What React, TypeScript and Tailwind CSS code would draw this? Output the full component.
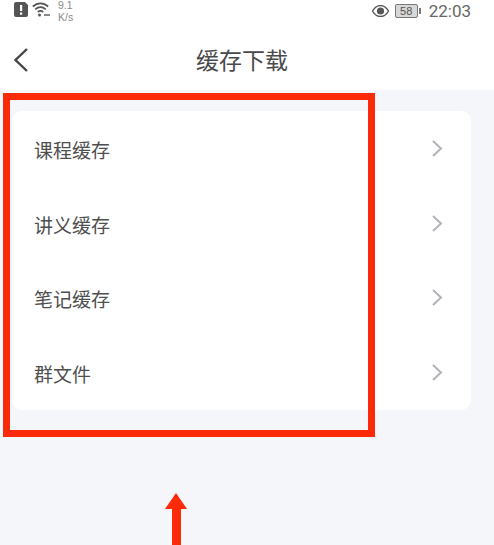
const rows = ["课程缓存", "讲义缓存", "笔记缓存", "群文件"];

function StatusBar() {
  return (
    <div className="flex h-[29px] items-start justify-between pl-[14px] pr-[23px] text-[#6b6b6b]">
      <div className="flex items-start gap-[4px]">
        <svg width="14" height="15" viewBox="0 0 14 15" className="mt-[2px]">
          <path d="M3 0h8l3 3v10a2 2 0 0 1-2 2H2a2 2 0 0 1-2-2V2a2 2 0 0 1 2-2z" fill="#555" />
          <rect x="6" y="3" width="2.2" height="6" fill="#fff" />
          <rect x="6" y="10.5" width="2.2" height="2.2" fill="#fff" />
        </svg>
        <svg width="18" height="15" viewBox="0 0 18 15" className="mt-[2px]" fill="none" stroke="#555" strokeWidth="1.7">
          <path d="M0.8 4.500C5.500 0.200 11.500 0.200 16.200 4.500" />
          <path d="M3.200 7.300C6.500 4.500 10.500 4.500 13.800 7.300" />
          <path d="M5.800 10C7.500 8.700 9.500 8.700 11.200 10" />
          <circle cx="7.500" cy="13" r="1.500" fill="#555" stroke="none" />
          <path d="M12 13h6" strokeWidth="1.400" />
        </svg>
        <div className="ml-[4px] -mt-px flex flex-col font-['Liberation_Sans',sans-serif] text-[10.5px] leading-[12px] text-[#8a8a8a]">
          <span>9.1</span>
          <span>K/s</span>
        </div>
      </div>
      <div className="flex items-center gap-[8px] pt-[1px]">
        <svg width="17" height="12" viewBox="0 0 17 12">
          <path d="M0.500 6C3 1.800 5.500 0.500 8.500 0.500S14 1.800 16.500 6C14 10.200 11.500 11.500 8.500 11.500S3 10.200 0.500 6z" fill="none" stroke="#555" strokeWidth="1.300" />
          <circle cx="8.500" cy="6" r="3.600" fill="#555" />
        </svg>
        <div className="-ml-[2px] flex items-center gap-[1px]">
          <div className="flex h-[14px] w-[23px] items-center justify-center rounded-[2px] border border-[#777] bg-[#d8d8d8] font-['Liberation_Sans',sans-serif] text-[11px] leading-none text-[#555]">
            58
          </div>
          <div className="h-[6px] w-[2px] bg-[#777]" />
        </div>
        <span className="font-['Roboto',sans-serif] text-[17px] leading-[20px] text-[#666]">22:03</span>
      </div>
    </div>
  );
}

export default function App() {
  return (
    <div className="relative h-[545px] w-[494px] overflow-hidden bg-[#f5f6fa] font-['Noto_Sans_CJK_SC','Noto_Sans',sans-serif]">
      <div className="bg-white">
        <StatusBar />
        <div className="relative flex h-[61px] items-center justify-center pr-[10px]">
          <svg width="16" height="26" viewBox="0 0 16 26" fill="none" stroke="#444" strokeWidth="2.400" className="absolute left-[13px] top-[18px]">
            <path d="M14 2L2.500 13L14 24" />
          </svg>
          <span className="text-[23px] text-[#4a4a4a]">缓存下载</span>
        </div>
      </div>

      <div className="mx-[12px] mt-[21px] w-[459px] rounded-[10px] bg-white pt-[1px]">
        {rows.map((row) => (
          <div key={row} className="flex h-[74.500px] items-center justify-between pl-[22px] pr-[28px] pt-[2px]">
            <span className="text-[19px] text-[#4f4f4f]">{row}</span>
            <svg width="12" height="19" viewBox="0 0 12 19" fill="none" stroke="#b0b4ba" strokeWidth="2" className="-mt-[3px]">
              <path d="M2 2L10 9.500L2 17" />
            </svg>
          </div>
        ))}
      </div>

      {/* red annotation drawn over the screenshot */}
      <div className="absolute left-[3px] top-[93px] h-[344px] w-[372px] border-[7px] border-[#fb2a08]" />
      <div className="absolute left-[165px] top-[493px] flex flex-col items-center">
        <div className="h-0 w-0 border-x-[11px] border-b-[16px] border-x-transparent border-b-[#fb2a08]" />
        <div className="h-[40px] w-[9px] bg-[#fb2a08]" />
      </div>
    </div>
  );
}
